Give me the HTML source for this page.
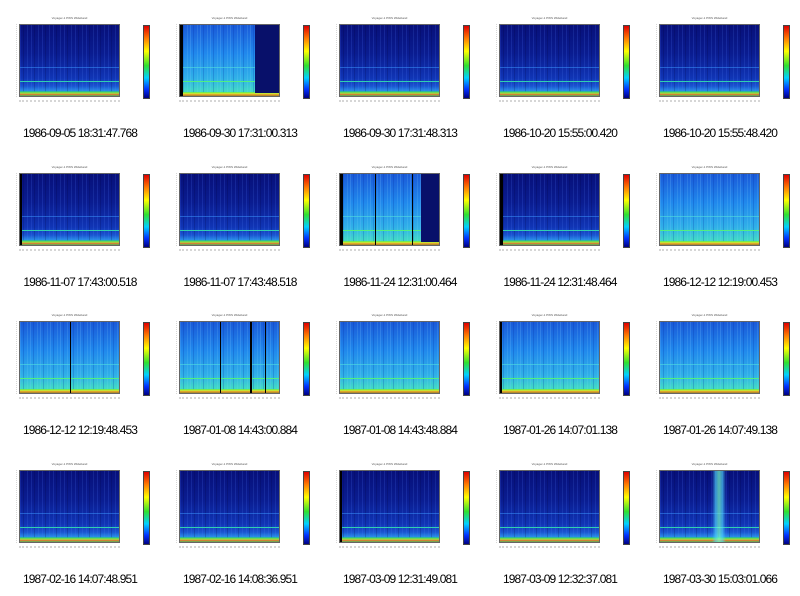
<!DOCTYPE html>
<html><head><meta charset="utf-8"><style>
body{margin:0;width:800px;height:596px;background:#fff;position:relative;overflow:hidden;font-family:"Liberation Sans",sans-serif}
.c{position:absolute;width:160px;height:149px}
.p{position:absolute;left:19px;top:24px;width:101px;height:73px;border:0.5px solid #666;box-sizing:border-box}
.d{background:
linear-gradient(to bottom,transparent 0,transparent 93%,#30d070 94%,#a0e040 96%,#e07030 98%,#40c060 100%),
linear-gradient(to bottom,transparent 79%,#30d0b0 79%,#30d0b0 80.5%,transparent 80.5%),
linear-gradient(to bottom,transparent 59%,rgba(60,150,255,.5) 59%,rgba(60,150,255,.5) 60.5%,transparent 60.5%),
repeating-linear-gradient(to right,rgba(80,120,255,.18) 0 1px,transparent 1px 3px,rgba(0,0,60,.2) 3px 4px,transparent 4px 7px,rgba(90,140,255,.15) 7px 8px,transparent 8px 11px),
linear-gradient(to bottom,#07107a 0%,#0a1c90 40%,#1035b5 75%,#1a55d0 86%,#2a90e8 93%)}
.l{background:
linear-gradient(to bottom,transparent 0,transparent 94%,#70f040 95%,#e0e030 97%,#e06020 99%,#60e040 100%),
linear-gradient(to bottom,transparent 79%,#50f080 79%,#50f080 80.5%,transparent 80.5%),
linear-gradient(to bottom,transparent 59%,rgba(80,220,220,.6) 59%,rgba(80,220,220,.6) 60.5%,transparent 60.5%),
repeating-linear-gradient(to right,rgba(120,200,255,.22) 0 1px,transparent 1px 3px,rgba(0,40,160,.22) 3px 4px,transparent 4px 7px,rgba(140,220,255,.15) 7px 8px,transparent 8px 10px),
linear-gradient(to bottom,#1a5ad8 0%,#2088ec 40%,#30b0e8 75%,#40d8c8 92%)}
.cb{position:absolute;left:143px;top:25px;width:5px;height:72px;border:0.5px solid #444;background:linear-gradient(to bottom,#e00000,#ff8000 18%,#ffff00 35%,#30e030 55%,#00d0ff 72%,#0030ff 88%,#000080)}
.t{position:absolute;left:0;width:160px;top:126px;text-align:center;font-size:12px;letter-spacing:-0.9px;line-height:14px;color:#000;white-space:nowrap}
.h{position:absolute;left:19px;width:101px;top:16px;font-size:3px;color:#555;text-align:center}
.x{position:absolute;left:19px;width:101px;top:100px;height:6px;border-top:2px dotted #bbb;opacity:.6}
.y{position:absolute;left:12px;top:24px;width:4px;height:73px;border-right:1px dotted #bbb;opacity:.6}
.bk{position:absolute;top:0;bottom:0;background:#000}
.dr{position:absolute;top:0;bottom:3px;right:0;background:#08106a}
</style></head><body>
<div class="c" style="left:0;top:0"><div class="h">Voyager-1 PWS Wideband</div><div class="y"></div><div class="p d"></div><div class="x"></div><div class="cb"></div><div class="t">1986-09-05 18:31:47.768</div></div>
<div class="c" style="left:160px;top:0"><div class="h">Voyager-1 PWS Wideband</div><div class="y"></div><div class="p l"><div class="bk" style="left:0;width:3px"></div><div class="dr" style="width:24px"></div></div><div class="x"></div><div class="cb"></div><div class="t">1986-09-30 17:31:00.313</div></div>
<div class="c" style="left:320px;top:0"><div class="h">Voyager-1 PWS Wideband</div><div class="y"></div><div class="p d"></div><div class="x"></div><div class="cb"></div><div class="t">1986-09-30 17:31:48.313</div></div>
<div class="c" style="left:480px;top:0"><div class="h">Voyager-1 PWS Wideband</div><div class="y"></div><div class="p d"></div><div class="x"></div><div class="cb"></div><div class="t">1986-10-20 15:55:00.420</div></div>
<div class="c" style="left:640px;top:0"><div class="h">Voyager-1 PWS Wideband</div><div class="y"></div><div class="p d"></div><div class="x"></div><div class="cb"></div><div class="t">1986-10-20 15:55:48.420</div></div>

<div class="c" style="left:0;top:149px"><div class="h">Voyager-1 PWS Wideband</div><div class="y"></div><div class="p d"><div class="bk" style="left:0;width:2px"></div></div><div class="x"></div><div class="cb"></div><div class="t">1986-11-07 17:43:00.518</div></div>
<div class="c" style="left:160px;top:149px"><div class="h">Voyager-1 PWS Wideband</div><div class="y"></div><div class="p d"></div><div class="x"></div><div class="cb"></div><div class="t">1986-11-07 17:43:48.518</div></div>
<div class="c" style="left:320px;top:149px"><div class="h">Voyager-1 PWS Wideband</div><div class="y"></div><div class="p l"><div class="bk" style="left:0;width:3px"></div><div class="bk" style="left:35px;width:1px"></div><div class="bk" style="left:72px;width:1px"></div><div class="dr" style="width:18px"></div></div><div class="x"></div><div class="cb"></div><div class="t">1986-11-24 12:31:00.464</div></div>
<div class="c" style="left:480px;top:149px"><div class="h">Voyager-1 PWS Wideband</div><div class="y"></div><div class="p d"><div class="bk" style="left:0;width:3px"></div></div><div class="x"></div><div class="cb"></div><div class="t">1986-11-24 12:31:48.464</div></div>
<div class="c" style="left:640px;top:149px"><div class="h">Voyager-1 PWS Wideband</div><div class="y"></div><div class="p l"></div><div class="x"></div><div class="cb"></div><div class="t">1986-12-12 12:19:00.453</div></div>

<div class="c" style="left:0;top:297px"><div class="h">Voyager-1 PWS Wideband</div><div class="y"></div><div class="p l"><div class="bk" style="left:50px;width:1px"></div></div><div class="x"></div><div class="cb"></div><div class="t">1986-12-12 12:19:48.453</div></div>
<div class="c" style="left:160px;top:297px"><div class="h">Voyager-1 PWS Wideband</div><div class="y"></div><div class="p l"><div class="bk" style="left:40px;width:1px"></div><div class="bk" style="left:70px;width:2px"></div><div class="bk" style="left:85px;width:1px"></div></div><div class="x"></div><div class="cb"></div><div class="t">1987-01-08 14:43:00.884</div></div>
<div class="c" style="left:320px;top:297px"><div class="h">Voyager-1 PWS Wideband</div><div class="y"></div><div class="p l"></div><div class="x"></div><div class="cb"></div><div class="t">1987-01-08 14:43:48.884</div></div>
<div class="c" style="left:480px;top:297px"><div class="h">Voyager-1 PWS Wideband</div><div class="y"></div><div class="p l"><div class="bk" style="left:0;width:2px"></div></div><div class="x"></div><div class="cb"></div><div class="t">1987-01-26 14:07:01.138</div></div>
<div class="c" style="left:640px;top:297px"><div class="h">Voyager-1 PWS Wideband</div><div class="y"></div><div class="p l"></div><div class="x"></div><div class="cb"></div><div class="t">1987-01-26 14:07:49.138</div></div>

<div class="c" style="left:0;top:446px"><div class="h">Voyager-1 PWS Wideband</div><div class="y"></div><div class="p d"></div><div class="x"></div><div class="cb"></div><div class="t">1987-02-16 14:07:48.951</div></div>
<div class="c" style="left:160px;top:446px"><div class="h">Voyager-1 PWS Wideband</div><div class="y"></div><div class="p d"></div><div class="x"></div><div class="cb"></div><div class="t">1987-02-16 14:08:36.951</div></div>
<div class="c" style="left:320px;top:446px"><div class="h">Voyager-1 PWS Wideband</div><div class="y"></div><div class="p d"><div class="bk" style="left:0;width:2px"></div></div><div class="x"></div><div class="cb"></div><div class="t">1987-03-09 12:31:49.081</div></div>
<div class="c" style="left:480px;top:446px"><div class="h">Voyager-1 PWS Wideband</div><div class="y"></div><div class="p d"></div><div class="x"></div><div class="cb"></div><div class="t">1987-03-09 12:32:37.081</div></div>
<div class="c" style="left:640px;top:446px"><div class="h">Voyager-1 PWS Wideband</div><div class="y"></div><div class="p d"><div style="position:absolute;left:52px;width:14px;top:0;bottom:0;background:linear-gradient(to right,transparent,rgba(80,220,255,.6),rgba(120,255,200,.7),rgba(80,220,255,.6),transparent)"></div></div><div class="x"></div><div class="cb"></div><div class="t">1987-03-30 15:03:01.066</div></div>
</body></html>
